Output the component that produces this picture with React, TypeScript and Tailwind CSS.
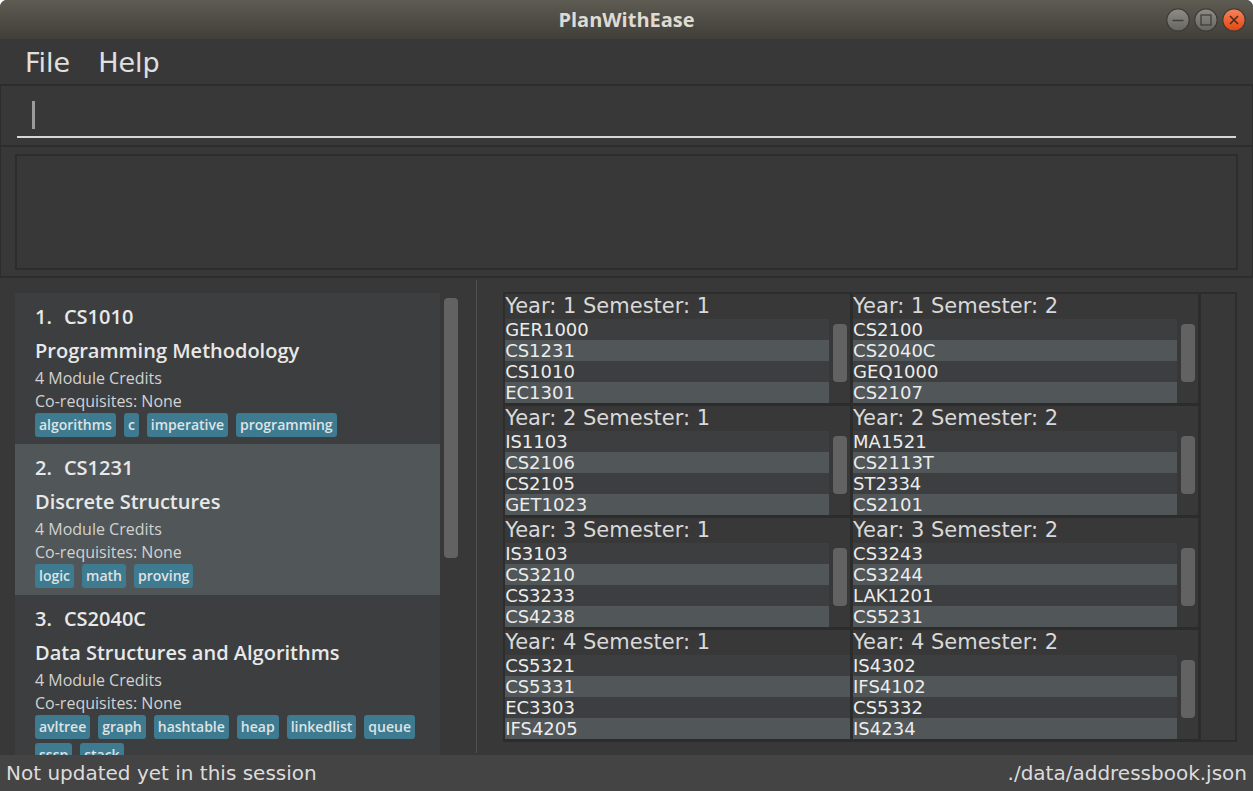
type Module = { code: string; title: string; tags: string[] };

const modules: Module[] = [
  { code: 'CS1010', title: 'Programming Methodology', tags: ['algorithms', 'c', 'imperative', 'programming'] },
  { code: 'CS1231', title: 'Discrete Structures', tags: ['logic', 'math', 'proving'] },
  {
    code: 'CS2040C',
    title: 'Data Structures and Algorithms',
    tags: ['avltree', 'graph', 'hashtable', 'heap', 'linkedlist', 'queue', 'sssp', 'stack'],
  },
];

type Semester = { year: number; semester: number; codes: string[]; scrolls: boolean };

const semesters: Semester[] = [
  { year: 1, semester: 1, codes: ['GER1000', 'CS1231', 'CS1010', 'EC1301'], scrolls: true },
  { year: 1, semester: 2, codes: ['CS2100', 'CS2040C', 'GEQ1000', 'CS2107'], scrolls: true },
  { year: 2, semester: 1, codes: ['IS1103', 'CS2106', 'CS2105', 'GET1023'], scrolls: true },
  { year: 2, semester: 2, codes: ['MA1521', 'CS2113T', 'ST2334', 'CS2101'], scrolls: true },
  { year: 3, semester: 1, codes: ['IS3103', 'CS3210', 'CS3233', 'CS4238'], scrolls: true },
  { year: 3, semester: 2, codes: ['CS3243', 'CS3244', 'LAK1201', 'CS5231'], scrolls: true },
  { year: 4, semester: 1, codes: ['CS5321', 'CS5331', 'EC3303', 'IFS4205'], scrolls: false },
  { year: 4, semester: 2, codes: ['IS4302', 'IFS4102', 'CS5332', 'IS4234'], scrolls: true },
];

function WindowButton({ kind }: { kind: 'Minimize' | 'Maximize' | 'Close' }) {
  const close = kind === 'Close';
  return (
    <button type="button" aria-label={kind} className="size-6">
      <svg viewBox="0 0 24 24" className="size-6" fill="none">
        <defs>
          <linearGradient id={kind} x1="0" y1="0" x2="0" y2="1">
            <stop offset="0" stopColor={close ? '#f58560' : '#8e8c85'} />
            <stop offset="0.5" stopColor={close ? '#ef6435' : '#7b7973'} />
            <stop offset="1" stopColor={close ? '#dd4814' : '#66645e'} />
          </linearGradient>
        </defs>
        <circle cx="12" cy="12" r="11.2" fill={`url(#${kind})`} stroke="#3b3a35" strokeWidth="1.2" />
        {kind === 'Minimize' && <path d="M6.5 12.5h11" stroke="#403f3a" strokeWidth="1.3" />}
        {kind === 'Maximize' && <rect x="7" y="7" width="10" height="10" stroke="#403f3a" strokeWidth="1.3" />}
        {close && <path d="M8 8l8 8M16 8l-8 8" stroke="#4a2a1b" strokeWidth="1.6" />}
      </svg>
    </button>
  );
}

function ModuleCard({ module, index }: { module: Module; index: number }) {
  return (
    <li className="px-5 pt-[7px] pb-[7px] odd:bg-[#3c3e3f] even:bg-[#515658]">
      <h2 className="flex gap-3 text-[20px] leading-[34px] font-semibold text-[#e8e8e8]">
        <span>{index}.</span>
        <span>{module.code}</span>
      </h2>
      <h3 className="text-[20px] leading-[33px] font-semibold text-[#e8e8e8]">{module.title}</h3>
      <p className="text-[16px] leading-[23px] text-[#d2d2d2]">4 Module Credits</p>
      <p className="text-[16px] leading-[23px] text-[#d2d2d2]">Co-requisites: None</p>
      <ul className="flex flex-wrap gap-x-2 gap-y-1">
        {module.tags.map((tag) => (
          <li
            key={tag}
            className="rounded-[3px] bg-[#3e7b91] px-1 text-[14px] leading-6 font-semibold text-[#dfe3e4]"
          >
            {tag}
          </li>
        ))}
      </ul>
    </li>
  );
}

function SemesterCell({ data }: { data: Semester }) {
  return (
    <section className="border-r-[3px] border-b-[3px] border-[#2c2c2c]">
      <h2 className="text-[21px] leading-[25px] text-[#d8d8d8]">
        Year: {data.year} Semester: {data.semester}
      </h2>
      <div className="flex">
        <ul className="flex-1 text-[18px] leading-[21px] text-[#ececec]">
          {data.codes.map((code) => (
            <li key={code} className="odd:bg-[#3c3e3f] even:bg-[#515658]">
              {code}
            </li>
          ))}
        </ul>
        {data.scrolls && (
          <div className="w-[21px] pt-[5px] pl-1">
            <div className="h-[58px] w-[14px] rounded-[4px] bg-[#626262]" />
          </div>
        )}
      </div>
    </section>
  );
}

export default function App() {
  return (
    <div className="h-screen bg-white">
      <div className="flex h-full flex-col overflow-hidden rounded-t-[7px] bg-[#383838] font-['DejaVu_Sans',sans-serif]">
        <header className="grid h-[39px] shrink-0 grid-cols-3 items-center bg-linear-to-b from-[#5e5b52] to-[#403f3a]">
          <h1 className="col-start-2 text-center font-['Open_Sans','Noto_Sans',sans-serif] text-[20px] font-bold text-[#dfdbd2]">
            PlanWithEase
          </h1>
          <div className="flex justify-end gap-1 pr-[7px]">
            <WindowButton kind="Minimize" />
            <WindowButton kind="Maximize" />
            <WindowButton kind="Close" />
          </div>
        </header>

        <nav className="flex h-[45px] shrink-0 items-center gap-7 px-[25px] pt-1 text-[27px] text-[#e0e0e0]">
          <button type="button">File</button>
          <button type="button">Help</button>
        </nav>

        <div className="shrink-0 border-x border-y-2 border-[#2d2d2d] px-4 pb-[7px]">
          <div className="flex h-[52px] items-center border-b-2 border-[#d6d6d6] pt-2 pl-[15px]">
            <span className="h-7 w-[3px] bg-[#9b9b9b]" />
            <input
              type="text"
              aria-label="Command"
              className="h-8 min-w-0 flex-1 bg-transparent text-[20px] text-white outline-none"
            />
          </div>
        </div>

        <div className="shrink-0 border-x border-b-2 border-[#2d2d2d] px-[14px] pt-[7px] pb-[6px]">
          <output aria-label="Result" className="block h-[116px] border-2 border-[#2d2d2d]" />
        </div>

        <main className="flex min-h-0 flex-1">
          <div className="flex w-[38%] pt-[15px] pl-[15px]">
            <ol className="min-w-0 flex-1 overflow-hidden bg-[#3c3e3f] font-['Open_Sans','Noto_Sans',sans-serif]">
              {modules.map((module, i) => (
                <ModuleCard key={module.code} module={module} index={i + 1} />
              ))}
            </ol>
            <div className="w-9 pt-[5px] pl-1">
              <div className="h-[260px] w-[14px] rounded-[4px] bg-[#626262]" />
            </div>
          </div>
          <div className="mt-[2px] mb-[2px] w-px bg-[#515151]" />
          <div className="min-w-0 flex-1 pt-[14px] pr-4 pl-[26px]">
            <div className="flex border-t-2 border-r-2 border-l-2 border-[#2d2d2d]">
              <div className="grid flex-1 grid-cols-2">
                {semesters.map((data) => (
                  <SemesterCell key={`${data.year}-${data.semester}`} data={data} />
                ))}
              </div>
              <div className="w-[34px] border-b-2 border-[#2d2d2d]" />
            </div>
          </div>
        </main>

        <footer className="flex h-9 shrink-0 items-center justify-between bg-[#444444] px-[6px] text-[20px] text-[#dcdcdc]">
          <span>Not updated yet in this session</span>
          <span>./data/addressbook.json</span>
        </footer>
      </div>
    </div>
  );
}
